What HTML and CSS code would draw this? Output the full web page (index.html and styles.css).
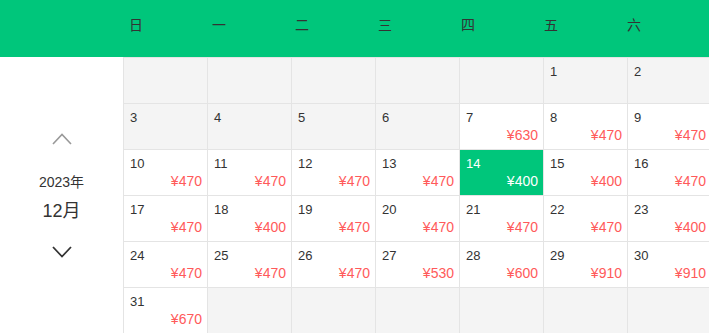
FILE: index.html
```html
<!DOCTYPE html>
<html lang="zh-CN">
<head>
<meta charset="utf-8">
<title>日历价格</title>
<link rel="stylesheet" href="styles.css">
</head>
<body>
<div class="page">
  <div class="week-head">
    <div class="head-spacer"></div>
    <div class="wd">日</div>
    <div class="wd">一</div>
    <div class="wd">二</div>
    <div class="wd">三</div>
    <div class="wd">四</div>
    <div class="wd">五</div>
    <div class="wd">六</div>
  </div>
  <div class="main">
    <aside class="side">
      <svg class="chev chev-up" width="20" height="12" viewBox="0 0 20 12"><polyline points="1,11 10,1.5 19,11" fill="none" stroke="#999" stroke-width="1.6"/></svg>
      <div class="year">2023年</div>
      <div class="month">12月</div>
      <svg class="chev chev-down" width="20" height="12" viewBox="0 0 20 12"><polyline points="1,1 10,10.5 19,1" fill="none" stroke="#333" stroke-width="1.8"/></svg>
    </aside>
    <div class="grid">
      <div class="cell off"></div>
      <div class="cell off"></div>
      <div class="cell off"></div>
      <div class="cell off"></div>
      <div class="cell off"></div>
      <div class="cell off"><div class="d">1</div></div>
      <div class="cell off"><div class="d">2</div></div>

      <div class="cell off"><div class="d">3</div></div>
      <div class="cell off"><div class="d">4</div></div>
      <div class="cell off"><div class="d">5</div></div>
      <div class="cell off"><div class="d">6</div></div>
      <div class="cell"><div class="d">7</div><div class="p">¥630</div></div>
      <div class="cell"><div class="d">8</div><div class="p">¥470</div></div>
      <div class="cell"><div class="d">9</div><div class="p">¥470</div></div>

      <div class="cell"><div class="d">10</div><div class="p">¥470</div></div>
      <div class="cell"><div class="d">11</div><div class="p">¥470</div></div>
      <div class="cell"><div class="d">12</div><div class="p">¥470</div></div>
      <div class="cell"><div class="d">13</div><div class="p">¥470</div></div>
      <div class="cell sel"><div class="d">14</div><div class="p">¥400</div></div>
      <div class="cell"><div class="d">15</div><div class="p">¥400</div></div>
      <div class="cell"><div class="d">16</div><div class="p">¥470</div></div>

      <div class="cell"><div class="d">17</div><div class="p">¥470</div></div>
      <div class="cell"><div class="d">18</div><div class="p">¥400</div></div>
      <div class="cell"><div class="d">19</div><div class="p">¥470</div></div>
      <div class="cell"><div class="d">20</div><div class="p">¥470</div></div>
      <div class="cell"><div class="d">21</div><div class="p">¥470</div></div>
      <div class="cell"><div class="d">22</div><div class="p">¥470</div></div>
      <div class="cell"><div class="d">23</div><div class="p">¥400</div></div>

      <div class="cell"><div class="d">24</div><div class="p">¥470</div></div>
      <div class="cell"><div class="d">25</div><div class="p">¥470</div></div>
      <div class="cell"><div class="d">26</div><div class="p">¥470</div></div>
      <div class="cell"><div class="d">27</div><div class="p">¥530</div></div>
      <div class="cell"><div class="d">28</div><div class="p">¥600</div></div>
      <div class="cell"><div class="d">29</div><div class="p">¥910</div></div>
      <div class="cell"><div class="d">30</div><div class="p">¥910</div></div>

      <div class="cell"><div class="d">31</div><div class="p">¥670</div></div>
      <div class="cell off"></div>
      <div class="cell off"></div>
      <div class="cell off"></div>
      <div class="cell off"></div>
      <div class="cell off"></div>
      <div class="cell off"></div>
    </div>
  </div>
</div>
</body>
</html>
```
FILE: styles.css
```css
* { box-sizing: border-box; }
html, body {
  margin: 0;
  padding: 0;
  background: #fff;
  overflow: hidden;
}
body {
  font-family: "Liberation Sans", "Noto Sans CJK SC", sans-serif;
  color: #333;
}
.page {
  width: 709px;
  height: 334px;
  overflow: hidden;
}
.week-head {
  display: flex;
  height: 57px;
  background: #00c67b;
  width: 720px;
}
.head-spacer {
  flex: 0 0 123px;
}
.wd {
  flex: 0 0 83px;
  padding-left: 6px;
  font-size: 14px;
  line-height: 50px;
  color: #333;
}
.main {
  display: flex;
  width: 720px;
}
.side {
  flex: 0 0 123px;
  display: flex;
  flex-direction: column;
  align-items: center;
}
.chev { display: block; }
.chev-up { margin-top: 76px; }
.year {
  margin-top: 27px;
  font-size: 14px;
  line-height: 20px;
  color: #333;
}
.month {
  margin-top: 7px;
  font-size: 18px;
  line-height: 24px;
  color: #333;
}
.chev-down { margin-top: 23px; }
.grid {
  flex: 0 0 588px;
  display: grid;
  grid-template-columns: repeat(7, 84px);
  grid-auto-rows: 46px;
}
.cell {
  border-left: 1px solid #e4e4e4;
  border-top: 1px solid #e4e4e4;
  background: #fff;
  padding: 6px 5px 0 6px;
}
.cell.off { background: #f4f4f4; }
.cell.sel { background: #00c67b; }
.d {
  font-size: 13px;
  line-height: 16px;
  color: #333;
}
.p {
  font-size: 14px;
  line-height: 18px;
  text-align: right;
  color: #ff5a5a;
}
.cell.sel .d, .cell.sel .p { color: #fff; }
```
